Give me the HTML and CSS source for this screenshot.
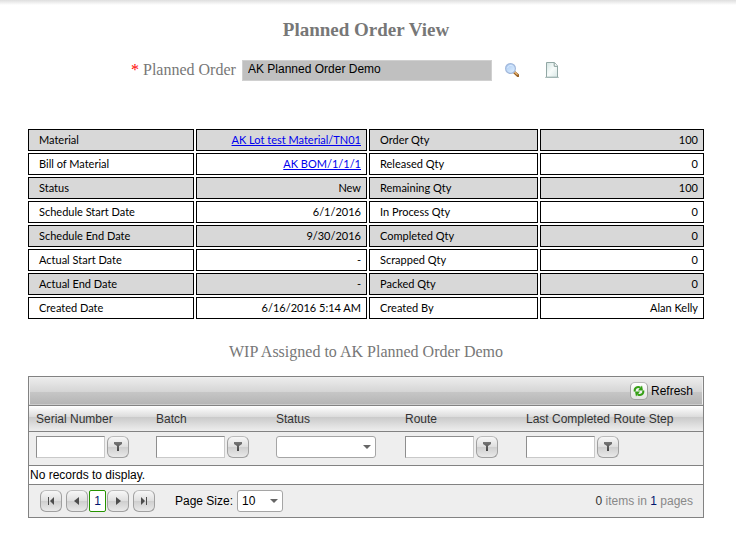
FILE: index.html
```html
<!DOCTYPE html>
<html lang="en">
<head>
<meta charset="utf-8">
<title>Planned Order View</title>
<link rel="stylesheet" href="styles.css">
</head>
<body>
<svg class="sprite" aria-hidden="true">
  <defs>
    <linearGradient id="funnel-fill" x1="0" y1="0" x2="0" y2="1"><stop offset="0" stop-color="#777"/><stop offset="1" stop-color="#444"/></linearGradient>
    <linearGradient id="lens-fill" x1="0" y1="0" x2="1" y2="1"><stop offset="0" stop-color="#a9caf3"/><stop offset="1" stop-color="#e2f1ff"/></linearGradient>
    <linearGradient id="page-fill" x1="0" y1="0" x2="1" y2="1"><stop offset="0" stop-color="#d3e4e2"/><stop offset=".5" stop-color="#f8fcfb"/><stop offset="1" stop-color="#d8e7e5"/></linearGradient>
    <symbol id="funnel" viewBox="0 0 8 9"><path d="M0 0h8v2L5 4v5H3V4L0 2z" fill="url(#funnel-fill)"/></symbol>
  </defs>
</svg>
<main class="page">
  <h1 class="title">Planned Order View</h1>
  <form class="lookup">
    <label class="lookup-label" for="order"><span class="required">*</span> Planned Order</label>
    <input class="lookup-input" id="order" type="text" value="AK Planned Order Demo" readonly>
    <button class="icon-button" type="button" aria-label="Search">
      <svg width="14" height="14" viewBox="0 0 14 14">
        <path d="M9 9l4 3.6" stroke="#9b6326" stroke-width="3" stroke-linecap="round"/>
        <path d="M9.6 9l2.6 2.4" stroke="#eebc79" stroke-width="1.2" stroke-linecap="round"/>
        <circle cx="5.5" cy="5.5" r="4.9" fill="url(#lens-fill)" stroke="#a3b9dc" stroke-width="1.2"/>
        <path d="M2.6 5a3.2 3.2 0 0 1 5-2" fill="none" stroke="#d8e9ff" stroke-width="1"/>
      </svg>
    </button>
    <button class="icon-button icon-button-new" type="button" aria-label="New">
      <svg width="14" height="16" viewBox="0 0 14 16">
        <path d="M0 15.4h14" stroke="#b6c4c2" stroke-width="1"/>
        <path d="M1.5.5h8l3 3.5v11.2h-11z" fill="url(#page-fill)" stroke="#92a8a5"/>
        <path d="M9.2.8v3.5h3.2" fill="#fff" stroke="#839a96"/>
      </svg>
    </button>
  </form>

  <table class="details">
    <colgroup><col class="d1"><col class="d2"><col class="d3"><col class="d4"></colgroup>
    <tbody>
      <tr><th>Material</th><td><a href="#">AK Lot test Material/TN01</a></td><th>Order Qty</th><td>100</td></tr>
      <tr><th>Bill of Material</th><td><a href="#">AK BOM/1/1/1</a></td><th>Released Qty</th><td>0</td></tr>
      <tr><th>Status</th><td>New</td><th>Remaining Qty</th><td>100</td></tr>
      <tr><th>Schedule Start Date</th><td>6/1/2016</td><th>In Process Qty</th><td>0</td></tr>
      <tr><th>Schedule End Date</th><td>9/30/2016</td><th>Completed Qty</th><td>0</td></tr>
      <tr><th>Actual Start Date</th><td>-</td><th>Scrapped Qty</th><td>0</td></tr>
      <tr><th>Actual End Date</th><td>-</td><th>Packed Qty</th><td>0</td></tr>
      <tr><th>Created Date</th><td>6/16/2016 5:14 AM</td><th>Created By</th><td>Alan Kelly</td></tr>
    </tbody>
  </table>

  <h2 class="subtitle">WIP Assigned to AK Planned Order Demo</h2>

  <section class="grid">
    <div class="toolbar">
      <button class="refresh" type="button">
        <span class="refresh-icon">
          <svg width="12" height="12" viewBox="0 0 12 12">
            <path d="M1.8 6.4C1 3 4.4.8 7.4 2.6" fill="none" stroke="#359f16" stroke-width="2"/>
            <path d="M5 5.4h5L9 .6z" fill="#359f16"/>
            <path d="M10.2 5.6c.8 3.4-2.6 5.6-5.6 3.8" fill="none" stroke="#359f16" stroke-width="2"/>
            <path d="M7 6.6H2l1 4.8z" fill="#359f16"/>
          </svg>
        </span>
        Refresh
      </button>
    </div>
    <table class="records">
      <colgroup><col class="g1"><col class="g2"><col class="g3"><col class="g4"><col></colgroup>
      <thead>
        <tr class="heads"><th>Serial Number</th><th>Batch</th><th>Status</th><th>Route</th><th>Last Completed Route Step</th></tr>
        <tr class="filters">
          <td><div class="filter"><input type="text" aria-label="Filter serial number"><button class="knob" type="button" aria-label="Serial number filter options"><svg width="8" height="9"><use href="#funnel"/></svg></button></div></td>
          <td><div class="filter"><input type="text" aria-label="Filter batch"><button class="knob" type="button" aria-label="Batch filter options"><svg width="8" height="9"><use href="#funnel"/></svg></button></div></td>
          <td><div class="combo combo-status"><select aria-label="Filter status"><option></option></select></div></td>
          <td><div class="filter"><input type="text" aria-label="Filter route"><button class="knob" type="button" aria-label="Route filter options"><svg width="8" height="9"><use href="#funnel"/></svg></button></div></td>
          <td><div class="filter"><input type="text" aria-label="Filter last completed route step"><button class="knob" type="button" aria-label="Route step filter options"><svg width="8" height="9"><use href="#funnel"/></svg></button></div></td>
        </tr>
      </thead>
      <tbody><tr><td class="empty" colspan="5">No records to display.</td></tr></tbody>
    </table>
    <div class="pager">
      <div class="pager-nav">
        <button class="knob" type="button" aria-label="First page"><svg width="8" height="8"><path d="M1 0h1v8H1zM7 0v8L3 4z" fill="#4d4d4d"/></svg></button>
        <button class="knob" type="button" aria-label="Previous page"><svg width="8" height="8"><path d="M6 0v8L1 4z" fill="#4d4d4d"/></svg></button>
      </div>
      <a class="current" href="#">1</a>
      <div class="pager-nav">
        <button class="knob" type="button" aria-label="Next page"><svg width="8" height="8"><path d="M2 0v8l5-4z" fill="#4d4d4d"/></svg></button>
        <button class="knob" type="button" aria-label="Last page"><svg width="8" height="8"><path d="M1 0v8l4-4zM6 0h1v8H6z" fill="#4d4d4d"/></svg></button>
      </div>
      <label class="size-label" for="size">Page Size:</label>
      <div class="combo combo-size"><select id="size"><option>10</option></select></div>
      <div class="summary"><b>0</b> items in <b class="pages">1</b> pages</div>
    </div>
  </section>
</main>
</body>
</html>
```
FILE: styles.css
```css
* { box-sizing: border-box; }

body {
  margin: 0;
  background: linear-gradient(#dedede, #fff) 0 0 / 100% 5px no-repeat #fff;
  font-family: "Liberation Sans", Arial, sans-serif;
  font-size: 12px;
  color: #000;
}

button { padding: 0; border: 0; background: none; font: inherit; color: inherit; }
button svg { display: block; }
.sprite { position: absolute; width: 0; height: 0; }

.page { padding: 18px 32px 32px 28px; }

.title,
.subtitle {
  margin: 0;
  font-family: "Liberation Serif", "Times New Roman", serif;
  line-height: 24px;
  text-align: center;
  color: #777;
}
.title { font-size: 19px; }
.subtitle { margin-top: 19px; font-size: 16px; font-weight: normal; }

.lookup { display: flex; align-items: center; margin: 17px 0 0 103px; height: 22px; }
.lookup-label {
  width: 111px;
  font-family: "Liberation Serif", "Times New Roman", serif;
  font-size: 16px;
  color: #777;
  white-space: nowrap;
}
.required { color: #f00; }
.lookup-input {
  width: 250px;
  height: 21px;
  padding: 0 5px 2px;
  border: 1px solid #d0d0d0;
  background: #c0c0c0;
  font: 12px "Liberation Sans", Arial, sans-serif;
}
.icon-button { margin-left: 13px; }
.icon-button-new { margin-left: 26px; }

.details {
  width: calc(100% + 4px);
  margin: 46px -2px 0;
  table-layout: fixed;
  border-collapse: separate;
  border-spacing: 2px;
  font-family: Lato, Calibri, sans-serif;
  font-size: 11px;
  line-height: 20px;
}
.d1 { width: 166px; }
.d2 { width: 171px; }
.d3 { width: 169px; }
.details th,
.details td { padding: 0 5px 0 10px; border: 1px solid #000; font-weight: normal; }
.details th { text-align: left; }
.details td { text-align: right; }
.details tr:nth-child(odd) > * { background: #d8d8d8; }
.details a { color: #00e; }

.grid { margin-top: 12px; border: 1px solid #828282; }

.toolbar {
  display: flex;
  justify-content: flex-end;
  align-items: center;
  height: 28px;
  padding-right: 9px;
  border: 1px solid #efefef;
  border-bottom-color: #ccc;
  background: linear-gradient(#ececec, #d4d4d4 55%, #c6c6c6 55%, #b5b5b5);
}
.refresh { display: flex; align-items: center; gap: 3px; }
.refresh-icon,
.knob {
  display: grid;
  place-items: center;
  border: 1px solid #a0a0a0;
  border-top-color: #bbb;
  border-radius: 6px;
  background: linear-gradient(#f7f7f7, #dedede 50%, #cecece 50%, #e9e9e9);
}
.refresh-icon { width: 18px; height: 18px; border-radius: 5px; background: linear-gradient(#fff, #e2e2e2); }
.knob { width: 22px; height: 22px; }

.records { width: 100%; table-layout: fixed; border-collapse: separate; border-spacing: 0; }
.g1 { width: 120px; }
.g2 { width: 120px; }
.g3 { width: 129px; }
.g4 { width: 121px; }
.heads th {
  height: 27px;
  padding: 0 7px;
  border-top: 1px solid #828282;
  border-bottom: 1px solid #828282;
  background: linear-gradient(#fff, #dcdcdc 43%, #c9c9c9 43%, #eee);
  font-weight: normal;
  text-align: left;
  white-space: nowrap;
  color: #333;
}
.filters td { height: 34px; padding: 0 7px 4px; border-bottom: 1px solid #828282; background: #eee; }
.filter { display: flex; gap: 2px; }
.filter input {
  width: 69px;
  height: 22px;
  border: 1px solid;
  border-color: #8e8e8e #c9c9c9 #c9c9c9 #8e8e8e;
  background: #fff;
}
.empty { height: 19px; padding: 0 1px; border-bottom: 1px solid #828282; }

.combo { position: relative; }
.combo::after {
  content: "";
  position: absolute;
  top: 9px;
  right: 5px;
  border: 4px solid transparent;
  border-top-color: #666;
  border-bottom: 0;
  pointer-events: none;
}
.combo select {
  display: block;
  width: 100%;
  height: 22px;
  padding: 0 4px;
  border: 1px solid #a5a5a5;
  border-radius: 3px;
  appearance: none;
  background: #fff;
  font: 12px "Liberation Sans", Arial, sans-serif;
  color: #000;
}
.combo-status { width: 100px; }
.combo-size { width: 46px; }

.pager { display: flex; align-items: center; height: 32px; padding: 0 10px 0 11px; background: #eee; }
.pager-nav { display: flex; gap: 4px; }
.current {
  width: 17px;
  margin: 0 1px;
  border: 1px solid #259300;
  border-radius: 2px;
  background: #fff;
  line-height: 20px;
  text-align: center;
  text-decoration: none;
  color: #00156e;
}
.size-label { margin: 0 4px 0 20px; }
.summary { margin-left: auto; color: #888; }
.summary b { font-weight: normal; color: #333; }
.summary .pages { color: #00156e; }
```
